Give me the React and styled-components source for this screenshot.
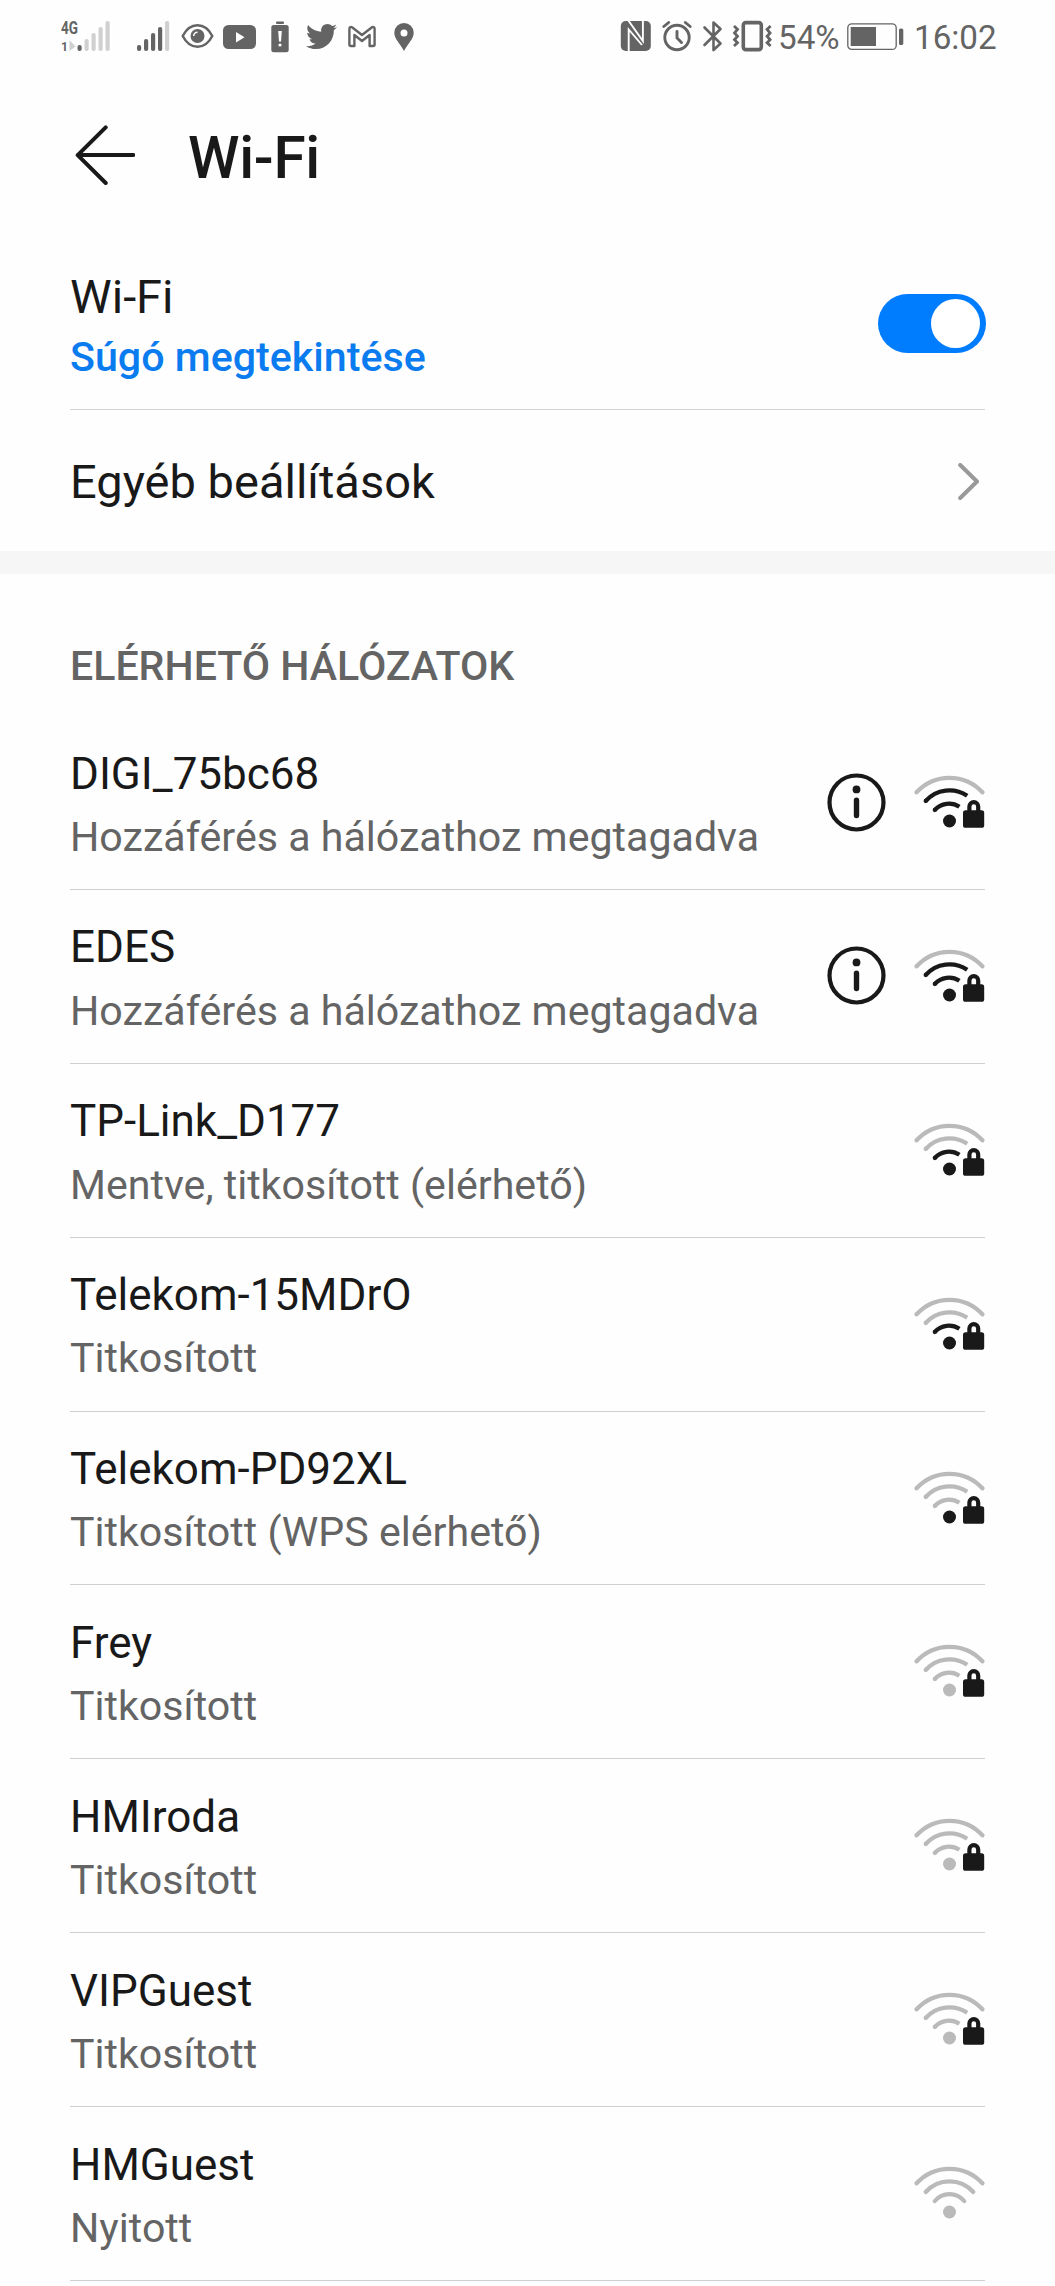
import React, {useState} from 'react';
import styled, {createGlobalStyle} from "styled-components";
import {FaTwitter} from "react-icons/fa";

const networks = [
    {name: "DIGI_75bc68", status: "Hozzáférés a hálózathoz megtagadva", level: 3, locked: true, info: true},
    {name: "EDES", status: "Hozzáférés a hálózathoz megtagadva", level: 3, locked: true, info: true},
    {name: "TP-Link_D177", status: "Mentve, titkosított (elérhető)", level: 2, locked: true},
    {name: "Telekom-15MDrO", status: "Titkosított", level: 2, locked: true},
    {name: "Telekom-PD92XL", status: "Titkosított (WPS elérhető)", level: 1, locked: true},
    {name: "Frey", status: "Titkosított", level: 0, locked: true},
    {name: "HMIroda", status: "Titkosított", level: 0, locked: true},
    {name: "VIPGuest", status: "Titkosított", level: 0, locked: true},
    {name: "HMGuest", status: "Nyitott", level: 0, locked: false},
];

const DARK = "#191919";
const FADED = "#bababa";
const GREY = "#646464";

// level 0 is an all grey signal, the dot counts as the first bar
function WifiIcon({level, locked}) {
    const color = n => level >= n ? DARK : FADED;
    return (
        <svg width="71" height="54" viewBox="0 0 71 54" fill="none" strokeWidth="4.3">
            <path d="M2.6 17.3A44.6 44.6 0 0 1 68.4 17.3" stroke={color(4)} strokeLinecap="round"/>
            {locked ? (
                <>
                    <path d="M11.7 26A31.8 31.8 0 0 1 53.2 20.8" stroke={color(3)}/>
                    <circle cx="11.7" cy="26" r="2.15" fill={color(3)}/>
                    <path d="M20.8 35A19.1 19.1 0 0 1 45.4 31.8" stroke={color(2)}/>
                    <circle cx="20.8" cy="35" r="2.15" fill={color(2)}/>
                </>
            ) : (
                <>
                    <path d="M11.7 26A31.8 31.8 0 0 1 59.3 26" stroke={color(3)} strokeLinecap="round"/>
                    <path d="M20.8 35A19.1 19.1 0 0 1 50.2 35" stroke={color(2)} strokeLinecap="round"/>
                </>
            )}
            <circle cx="35.5" cy="46" r="6.5" fill={color(1)}/>
            {locked && (
                <>
                    <rect x="49" y="35.3" width="21.2" height="17.5" rx="2.6" fill={DARK}/>
                    <path d="M55.4 37V31.6a4.4 4.4 0 0 1 8.8 0V37" stroke={DARK} strokeWidth="4.2"/>
                </>
            )}
        </svg>
    );
}

function InfoIcon() {
    return (
        <svg width="59" height="59" viewBox="0 0 59 59" fill="none" stroke={DARK}>
            <circle cx="29.5" cy="29.5" r="27" strokeWidth="4.2"/>
            <circle cx="29.5" cy="16.4" r="3.9" fill={DARK} stroke="none"/>
            <path d="M29.5 27.3V42.6" strokeWidth="5.4" strokeLinecap="round"/>
        </svg>
    );
}

function SignalBars({x = 0, level}) {
    return [6, 12, 18, 24, 30].map((h, i) => (
        <rect key={h} x={x + i * 7} y={31 - h} width="4.2" height={h} rx="2"
              fill={i < level ? GREY : "#d0d0d0"}/>
    ));
}

function LeftIcons() {
    return (
        <StatusGroup>
            <StatusIcon width="49" viewBox="0 0 49 33">
                <SmallLabel $size={18} x="0" y="14.2" textLength="17" lengthAdjust="spacingAndGlyphs">4G</SmallLabel>
                <SmallLabel $size={13.5} x="0" y="31" textLength="7" lengthAdjust="spacingAndGlyphs">1</SmallLabel>
                <path d="M8.5 20v11l6-4.5z" fill="#d0d0d0"/>
                <SignalBars x={16.5} level={1}/>
            </StatusIcon>
            <StatusIcon $left={27} width="33" viewBox="0 0 33 33">
                <SignalBars level={4}/>
            </StatusIcon>
            <StatusIcon $left={11} width="33" viewBox="0 0 33 33" fill="none" stroke={GREY}>
                <path d="M1.7 16C9 1.7 24 1.7 31.3 16C24 30.3 9 30.3 1.7 16z" strokeWidth="2.5" strokeLinejoin="round"/>
                <circle cx="16.5" cy="16" r="7" fill={GREY} stroke="none"/>
                <path d="M12.7 16a3.8 3.8 0 0 1 3.8-3.8" stroke="#fff" strokeWidth="1.5"/>
            </StatusIcon>
            <StatusIcon $left={9} width="33" viewBox="0 0 33 33">
                <rect y="5" width="33" height="24" rx="5.5" fill={GREY}/>
                <path d="M13 12v10.5l8.5-5.25z" fill="#fff"/>
            </StatusIcon>
            <StatusIcon $left={15} width="18" viewBox="0 0 18 33" fill={GREY}>
                <rect x="5" y="1.5" width="8" height="2.4" rx=".8"/>
                <rect x=".3" y="5" width="17.4" height="27.3" rx="2.5"/>
                <path d="M7.2 11h3.6l-.8 10.5h-2z" fill="#fff"/>
                <circle cx="9" cy="25" r="1.6" fill="#fff"/>
            </StatusIcon>
            <Bird/>
            <StatusIcon $left={11} width="28" viewBox="0 0 28 33" fill="none" stroke={GREY}>
                <path d="M2 7.3Q1.4 7.7 1.4 9V24.5Q1.4 26 3 26H6.4V15L14 21L21.6 15V26H25Q26.6 26 26.6 24.5V9Q26.6 6.5 24 7.2L14 15L4 7.3Q3 6.7 2 7.3z" strokeWidth="2.4" strokeLinejoin="round"/>
            </StatusIcon>
            <StatusIcon $left={18} width="20" viewBox="0 0 20 33">
                <path d="M10 3a9.7 9.7 0 0 0-9.7 9.7C.3 19 6 23 10 31C14 23 19.7 19 19.7 12.7A9.7 9.7 0 0 0 10 3zm0 6.500a3.5 3.5 0 1 1 0 7a3.5 3.5 0 0 1 0-7z" fill={GREY}/>
            </StatusIcon>
        </StatusGroup>
    );
}

function RightIcons() {
    return (
        <StatusGroup>
            <StatusIcon width="32" viewBox="0 0 32 33">
                <rect x=".8" y="1" width="30" height="30" rx="5" fill={GREY}/>
                <path d="M8.7 32V9.5L22 25M8 0L22.9 21V0" fill="none" stroke="#fff" strokeWidth="1.9"/>
            </StatusIcon>
            <StatusIcon $left={10} width="30" viewBox="0 0 30 33" fill="none" stroke={GREY} strokeLinecap="round">
                <circle cx="15" cy="17.5" r="12.2" strokeWidth="2.9"/>
                <path d="M15 11.5V18L19.5 22.5" strokeWidth="2.9"/>
                <path d="M1.8 6.5L6.7 2.5M28.2 6.5L23.3 2.5" strokeWidth="2.9"/>
            </StatusIcon>
            <StatusIcon $left={11} width="20" viewBox="0 0 20 33" fill="none" stroke={GREY} strokeWidth="2.6" strokeLinecap="round">
                <path d="M1.5 7.5L17.5 23.5L10.5 30V2.5L17.5 9L1.5 25" strokeLinejoin="round"/>
            </StatusIcon>
            <StatusIcon $left={9} width="41" viewBox="0 0 41 33" fill="none" stroke={GREY}>
                <rect x="11.3" y="2.6" width="18" height="27" rx="2.5" strokeWidth="3.6"/>
                <path d="M2 6l3.5 3.3L2.5 13l3 3.3l-3 3.4l3 3L2 26M38.600 6l-3.5 3.3L38.1 13l-3 3.3l3 3.4l-3 3L38.6 26" strokeWidth="2.8"/>
            </StatusIcon>
            <StatusText $left={5} $width={60}>54%</StatusText>
            <StatusIcon $left={9} width="57" viewBox="0 0 57 33">
                <rect x=".8" y="3.8" width="48.4" height="25.6" rx="4" fill="none" stroke={GREY} strokeWidth="1.3"/>
                <rect x="3.7" y="7" width="25.3" height="19" fill={GREY}/>
                <rect x="52" y="8.5" width="4.3" height="16.5" rx="1.6" fill={GREY}/>
            </StatusIcon>
            <StatusText $left={10} $width={82}>16:02</StatusText>
        </StatusGroup>
    );
}

function Network({network}) {
    return (
        <NetworkRow>
            <TextColumn>
                <NetworkName>{network.name}</NetworkName>
                <NetworkStatus>{network.status}</NetworkStatus>
            </TextColumn>
            <RowIcons>
                {network.info && <InfoIcon/>}
                <WifiIcon level={network.level} locked={network.locked}/>
            </RowIcons>
        </NetworkRow>
    );
}

function App() {
    const [enabled, setEnabled] = useState(true);

    return (
        <Screen>
            <GlobalStyle/>
            <StatusBar>
                <LeftIcons/>
                <RightIcons/>
            </StatusBar>
            <Header>
                <svg width="60" height="60" viewBox="0 0 60 60" fill="none" stroke={DARK} strokeWidth="4"
                     strokeLinecap="round" strokeLinejoin="round">
                    <path d="M58.3 30H2.7M30.7 2.3L2.7 30.2L30.7 58"/>
                </svg>
                <Title>Wi-Fi</Title>
            </Header>
            <WifiRow>
                <TextColumn>
                    <SettingName>Wi-Fi</SettingName>
                    <HelpLink>Súgó megtekintése</HelpLink>
                </TextColumn>
                <Toggle $on={enabled} onClick={() => setEnabled(!enabled)}>
                    <Knob/>
                </Toggle>
            </WifiRow>
            <SettingRow>
                <SettingName>Egyéb beállítások</SettingName>
                <svg width="22" height="38" viewBox="0 0 22 38" fill="none" stroke="#999" strokeWidth="4"
                     strokeLinecap="round" strokeLinejoin="round">
                    <path d="M3.2 2L20 18.500L3.2 35"/>
                </svg>
            </SettingRow>
            <Band/>
            <SectionTitle>ELÉRHETŐ HÁLÓZATOK</SectionTitle>
            {networks.map(n => <Network key={n.name} network={n}/>)}
        </Screen>
    )
}

export default App;

const GlobalStyle = createGlobalStyle`
    body {
        margin: 0;
        background: #fefefe;
    }
    svg {
        display: block;
        flex-shrink: 0;
    }
`

const Screen = styled.div`
    width: 1055px;
    height: 2286px;
    overflow: hidden;
    background: #fefefe;
    color: #191919;
    font-family: Roboto, sans-serif;
    line-height: 60px;
    white-space: nowrap;
`

const StatusBar = styled.div`
    height: 75px;
    padding: 0 59px 0 61px;
    box-sizing: border-box;
    display: flex;
    justify-content: space-between;
`

const StatusGroup = styled.div`
    display: flex;
    padding-top: 20px;
`

const StatusIcon = styled.svg`
    height: 33px;
    margin-left: ${p => p.$left || 0}px;
    overflow: visible;
`

const Bird = styled(FaTwitter)`
    width: 31px;
    height: 31px;
    margin: 1px 0 0 17px;
    color: #646464;
`

const SmallLabel = styled.text`
    font-size: ${p => p.$size}px;
    font-weight: 700;
    fill: #646464;
`

const StatusText = styled.div`
    width: ${p => p.$width}px;
    margin-left: ${p => p.$left}px;
    color: #646464;
    font-size: 33.2px;
    line-height: 35px;
`

const Header = styled.div`
    height: 160px;
    padding: 0 75px;
    display: flex;
    align-items: center;
`

const Title = styled.h1`
    margin: 0 0 0 53px;
    padding-top: 5px;
    font-size: 58.5px;
    font-weight: 500;
    letter-spacing: -0.3px;
`

const Row = styled.div`
    margin: 0 70px;
    display: flex;
    justify-content: space-between;
    box-sizing: border-box;
`

const WifiRow = styled(Row)`
    height: 175px;
    padding-top: 32px;
    border-bottom: 1px solid #d4d4d4;
`

const SettingRow = styled(Row)`
    height: 141px;
    padding: 2px 6px 0 0;
    align-items: center;
`

const TextColumn = styled.div`
    display: flex;
    flex-flow: column;
`

const SettingName = styled.div`
    font-size: 47px;
`

const HelpLink = styled.a`
    color: #0a7cf0;
    font-size: 41.2px;
    font-weight: 500;
`

const Toggle = styled.button`
    width: 108px;
    height: 59px;
    margin: 27px -1px 0 0;
    padding: 5px 6px 5px 5px;
    border: none;
    border-radius: 30px;
    background: ${p => p.$on ? "#007dff" : "#d0d0d0"};
    display: flex;
    justify-content: ${p => p.$on ? "flex-end" : "flex-start"};
`

const Knob = styled.div`
    width: 49px;
    height: 49px;
    border-radius: 50%;
    background: #fff;
`

const Band = styled.div`
    height: 23px;
    background: #f6f6f6;
`

const SectionTitle = styled.h2`
    height: 142px;
    margin: 0 70px;
    padding-top: 62px;
    box-sizing: border-box;
    color: #646464;
    font-size: 41.1px;
    font-weight: 500;
`

const NetworkRow = styled(Row)`
    height: 173.9px;
    padding-top: 27.5px;
    border-bottom: 1px solid #d0d0d0;
`

const NetworkName = styled.div`
    margin-bottom: 3.3px;
    font-size: 44px;
`

const NetworkStatus = styled.div`
    color: #646464;
    font-size: 41.15px;
`

const RowIcons = styled.div`
    height: 59px;
    margin-top: 29px;
    display: flex;
    align-items: center;
    gap: 28px;
`
